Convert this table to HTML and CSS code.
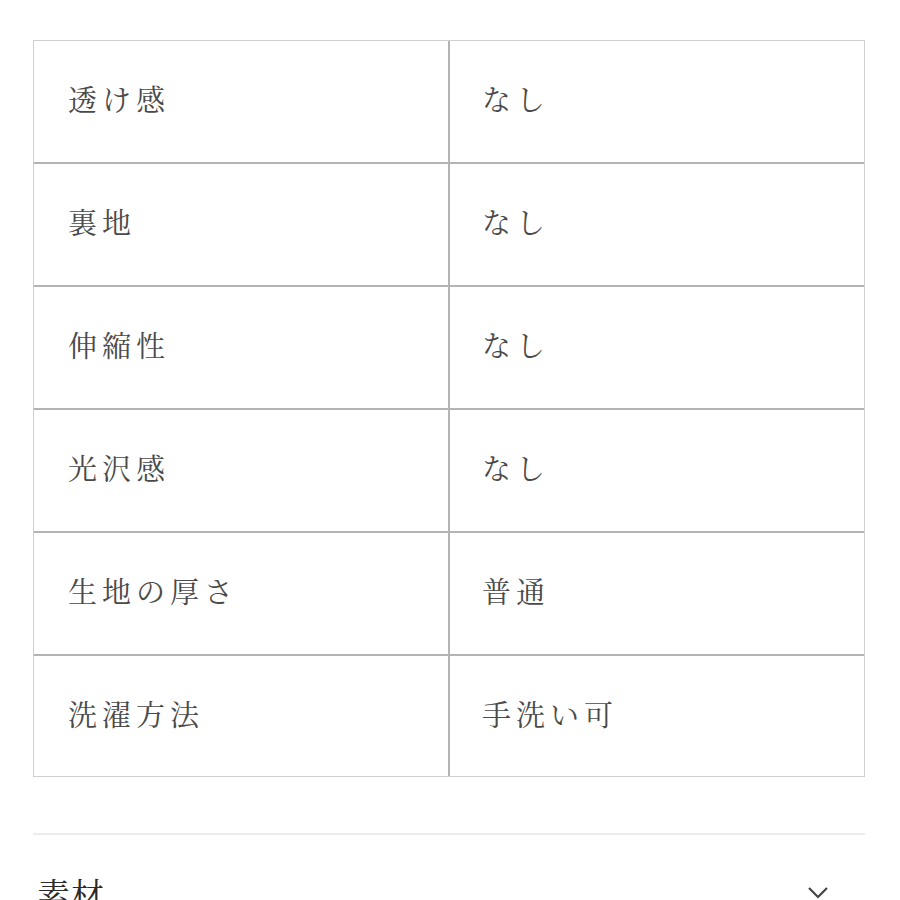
FILE: index.html
```html
<!DOCTYPE html>
<html lang="ja">
<head>
<meta charset="utf-8">
<link rel="stylesheet" href="styles.css">
</head>
<body>
<div class="page">
  <div class="spec">
    <div class="row"><div class="cell key">透け感</div><div class="cell val">なし</div></div>
    <div class="row"><div class="cell key">裏地</div><div class="cell val">なし</div></div>
    <div class="row"><div class="cell key">伸縮性</div><div class="cell val">なし</div></div>
    <div class="row"><div class="cell key">光沢感</div><div class="cell val">なし</div></div>
    <div class="row"><div class="cell key">生地の厚さ</div><div class="cell val">普通</div></div>
    <div class="row"><div class="cell key">洗濯方法</div><div class="cell val">手洗い可</div></div>
  </div>
  <div class="accordion">
    <span class="acc-title">素材</span>
    <svg class="chev" width="22" height="14" viewBox="0 0 22 14"><path d="M2 2 L11 11 L20 2" fill="none" stroke="#444" stroke-width="2.2"/></svg>
  </div>
</div>
</body>
</html>
```
FILE: styles.css
```css
html, body {
  margin: 0;
  padding: 0;
  background: #fff;
}
body {
  font-family: "Noto Serif CJK JP", "Noto Sans CJK JP", serif;
  overflow: hidden;
  height: 900px;
}
.page {
  padding: 40px 35px 0 33px;
}
.spec {
  border: 1px solid #cfcfcf;
  width: 830px;
}
.row {
  display: grid;
  grid-template-columns: 416px 1fr;
  height: 121px;
  border-top: 2px solid #b4b4b4;
}
.row:first-child {
  border-top: none;
  height: 121px;
}
.row:last-child {
  height: 120px;
}
.cell {
  display: flex;
  align-items: center;
  font-size: 29px;
  letter-spacing: 5px;
  color: #4a4a4a;
  padding-bottom: 6px;
}
.key {
  padding-left: 34px;
  border-right: 2px solid #b4b4b4;
}
.val {
  padding-left: 32px;
}
.accordion {
  margin-top: 56px;
  border-top: 2px solid #ececec;
  width: 832px;
  display: flex;
  justify-content: space-between;
  align-items: flex-start;
  padding-top: 34px;
}
.acc-title {
  font-size: 33px;
  color: #2a2a2a;
  padding-left: 4px;
  letter-spacing: 1px;
}
.chev {
  margin-top: 17px;
  margin-right: 36px;
}
```
